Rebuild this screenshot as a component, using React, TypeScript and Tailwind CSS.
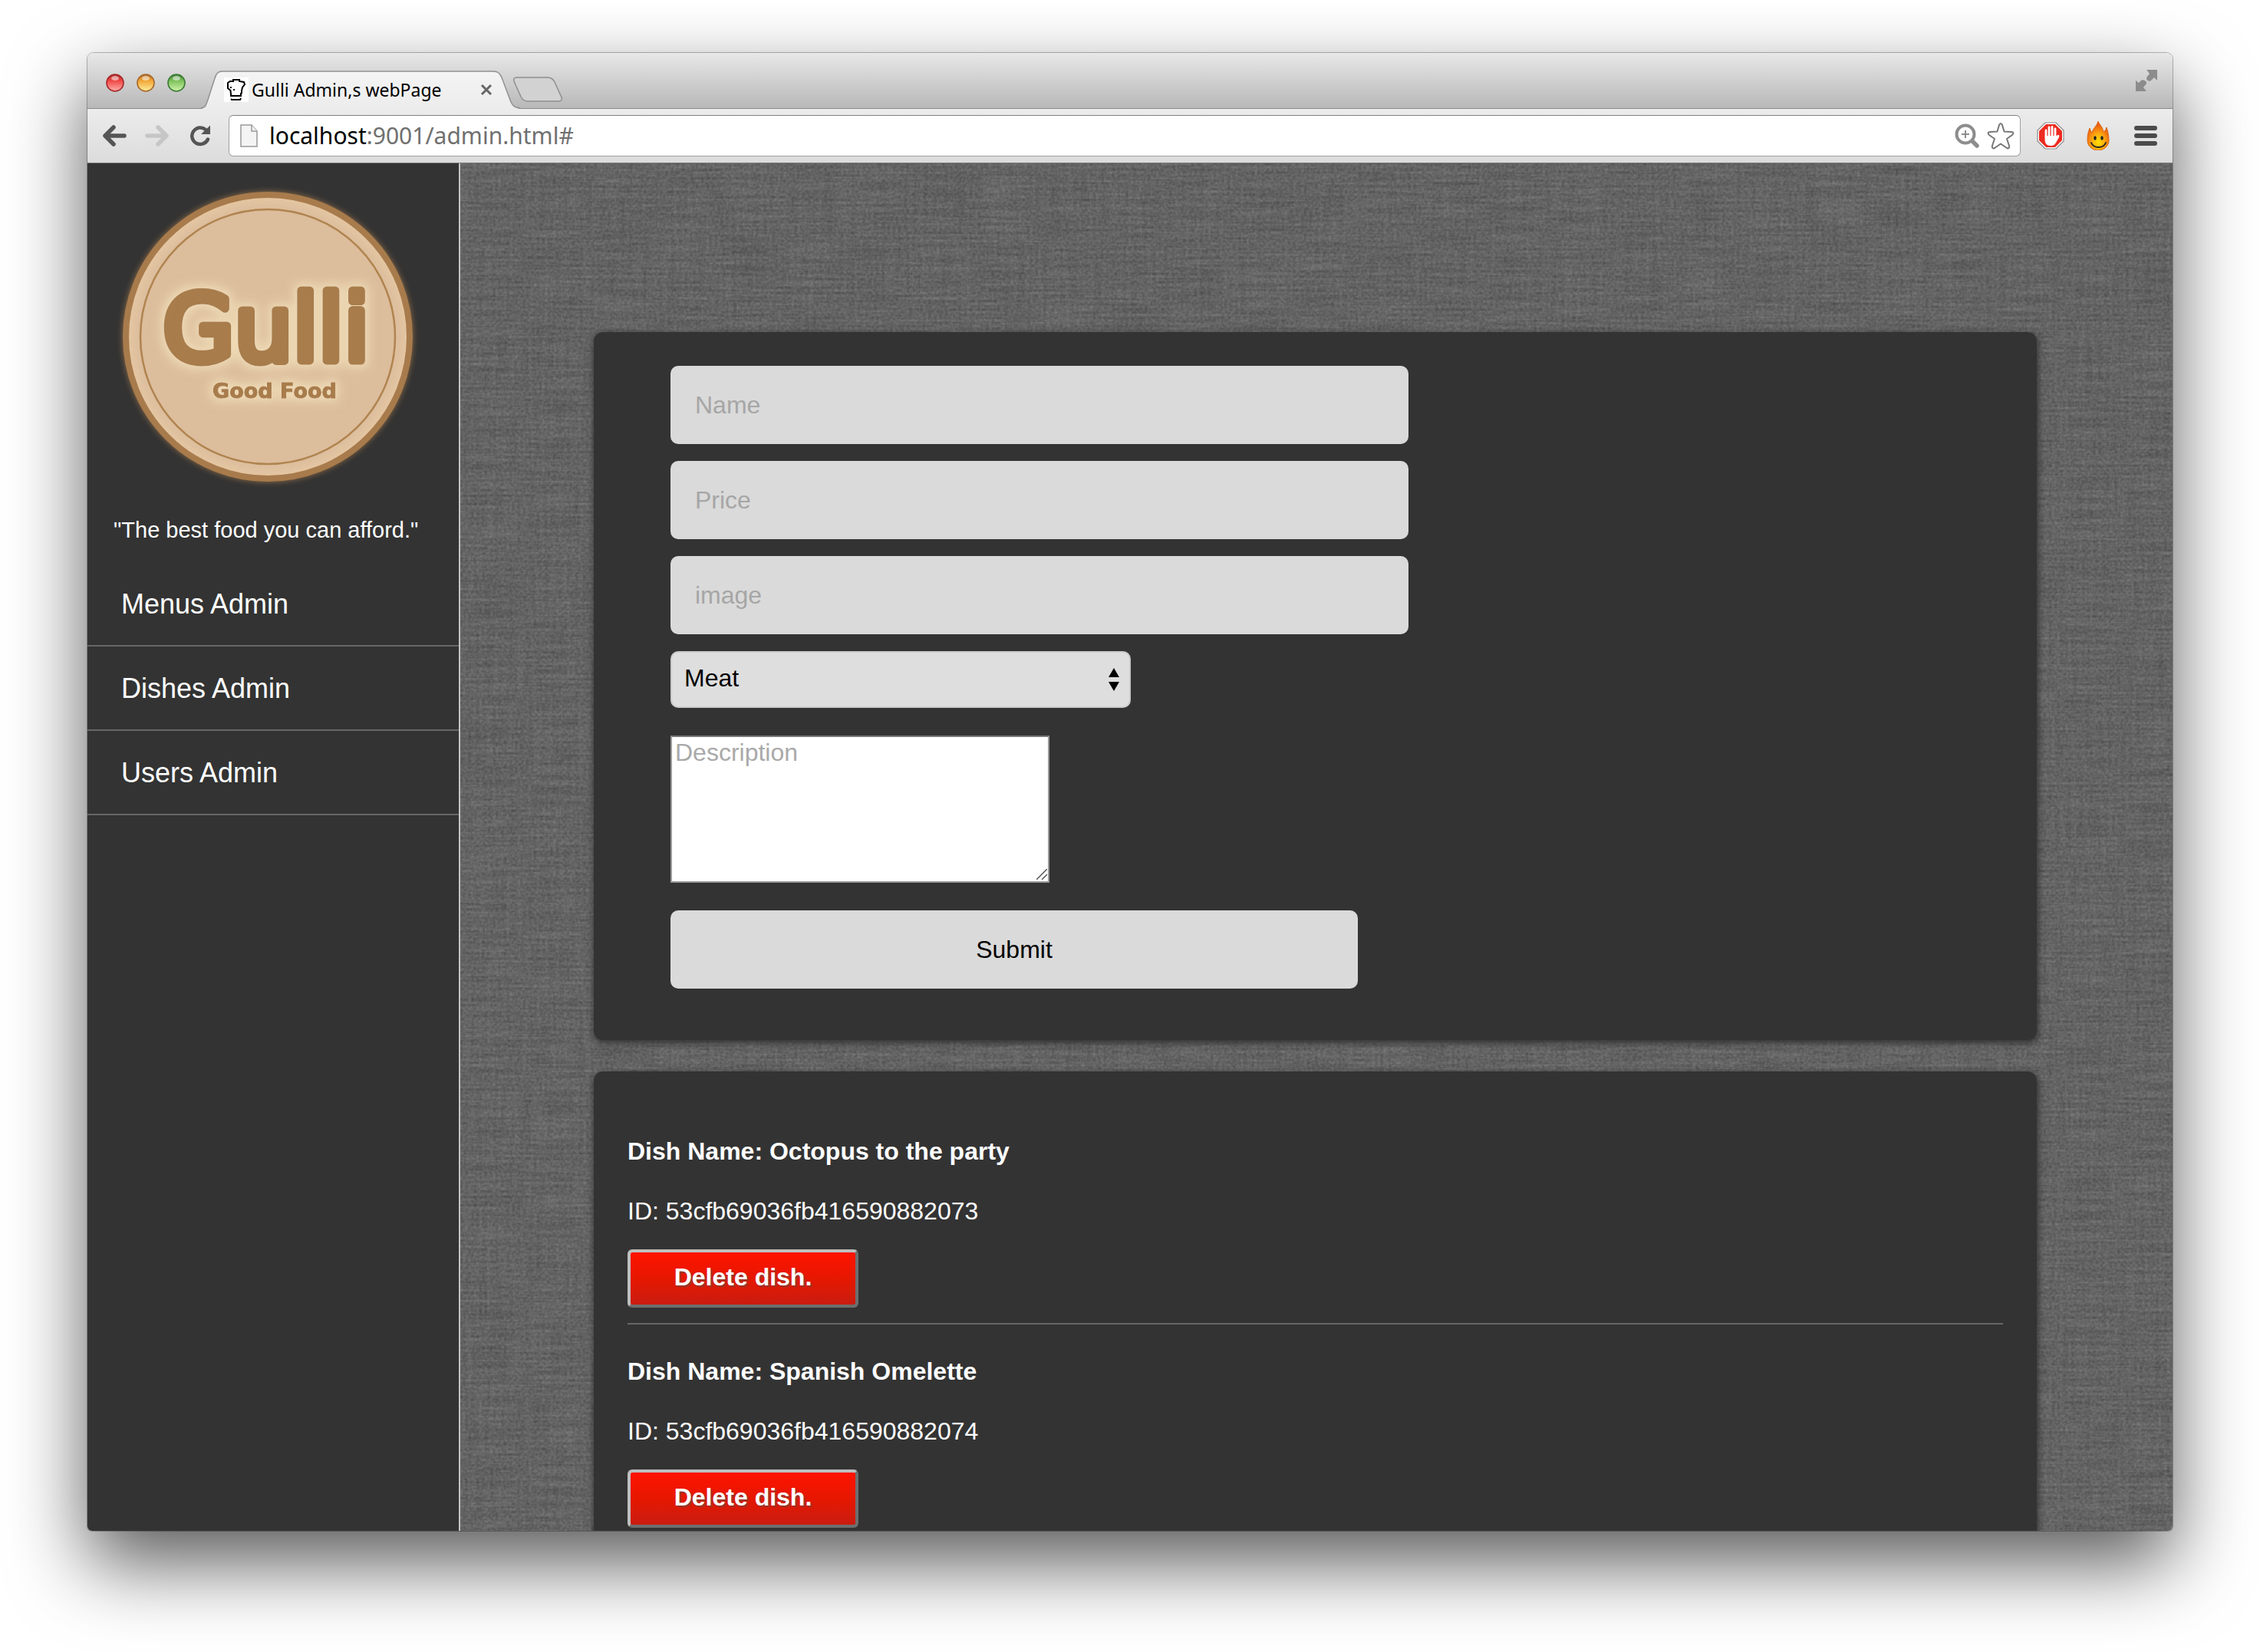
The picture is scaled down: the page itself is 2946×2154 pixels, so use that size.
import React from "react";

const navItems = ["Menus Admin", "Dishes Admin", "Users Admin"];

const dishes = [
  { name: "Octopus to the party", id: "53cfb69036fb416590882073" },
  { name: "Spanish Omelette", id: "53cfb69036fb416590882074" },
];

function TrafficLight({ label, id, edge, from, to }: { label: string; id: string; edge: string; from: string; to: string }) {
  return (
    <button type="button" aria-label={label} className="size-6 shrink-0">
      <svg viewBox="0 0 24 24" className="size-6">
        <defs>
          <linearGradient id={id} x1="0" y1="0" x2="0" y2="1">
            <stop offset="0" stopColor={edge} />
            <stop offset="0.35" stopColor={from} />
            <stop offset="1" stopColor={to} />
          </linearGradient>
        </defs>
        <circle cx="12" cy="12" r="11" fill={`url(#${id})`} stroke={edge} strokeWidth="1.6" />
        <ellipse cx="12" cy="6" rx="5" ry="3" fill="#fff" opacity="0.55" />
      </svg>
    </button>
  );
}

function ChefHat() {
  return (
    <svg viewBox="0 0 32 32" className="size-8 shrink-0 bg-white" fill="none" stroke="#000" strokeWidth="2">
      <path d="M9 22L8.500 17L5 14V7L8 5L12 5V3H20V5L26 6L27 9L24 13L23 17V21M8 13H10M12 16H14M9 21V24H22V20M9 28L10 29H21L22 27" />
    </svg>
  );
}

function TabStrip() {
  return (
    <div className="flex h-[73px] shrink-0 items-end rounded-t-lg border-b border-[#8a8a8a] bg-linear-to-b from-[#e8e8e8] to-[#b8b8b8]">
      <div className="flex gap-4 self-center pt-[5px] pl-6">
        <TrafficLight label="Close window" id="red" edge="#a32a2a" from="#ee4441" to="#ffb0ac" />
        <TrafficLight label="Minimize window" id="amber" edge="#a8682a" from="#f0a433" to="#ffee9c" />
        <TrafficLight label="Zoom window" id="green" edge="#3d7a35" from="#79bf58" to="#d0f5ac" />
      </div>
      <div className="relative -mb-px ml-5 flex h-[50px] w-[416px] items-center pl-[30px]">
        <svg viewBox="0 0 416 50" className="absolute inset-0 size-full" preserveAspectRatio="none">
          <defs>
            <linearGradient id="tab" x1="0" y1="0" x2="0" y2="1">
              <stop offset="0" stopColor="#f4f4f4" />
              <stop offset="1" stopColor="#ececec" />
            </linearGradient>
          </defs>
          <path d="M0 50C6 49 6 46 9 38L18 10C20 4 22 1 28 1H381C387 1 389 3 392 9L404 41C407 47 409 49 416 50Z" fill="url(#tab)" />
          <path d="M0 49C6 48 6 46 9 38L18 10C20 4 22 1 28 1H381C387 1 389 3 392 9L404 41C407 47 409 48 416 49" fill="none" stroke="#909090" strokeWidth="1.500" />
        </svg>
        <div className="relative flex flex-1 items-center gap-1">
          <ChefHat />
          <span className="flex-1 font-['Noto_Sans','Open_Sans',sans-serif] text-[23px] leading-8 whitespace-nowrap text-black">Gulli Admin,s webPage</span>
          <button type="button" aria-label="Close tab" className="mr-9 size-4">
            <svg viewBox="0 0 16 16" className="size-4" stroke="#666" strokeWidth="3">
              <path d="M2 2L14 14M14 2L2 14" />
            </svg>
          </button>
        </div>
      </div>
      <button type="button" aria-label="New tab" className="-ml-2.5 mb-2 h-[33px] w-[66px]">
        <svg viewBox="0 0 66 33" className="size-full">
          <path d="M6 1H46C51 1 53 3 55 7L64 27C65 30 64 32 60 32H20C15 32 13 30 11 26L2 6C1 3 2 1 6 1Z" fill="#d2d2d2" stroke="#8e8e8e" strokeWidth="1.500" />
        </svg>
      </button>
      <button type="button" aria-label="Enter full screen" className="mr-5 mb-[22px] ml-auto size-7">
        <svg viewBox="0 0 28 28" className="size-7" fill="#8c8c8c">
          <path d="M14 0H28V14L24 10L20 14C18 16 14 14 14 11C14 9 16 8 18 5Z" />
          <path d="M0 14L4 17L7 14C10 12 15 15 14 18C13 20 11 21 10 23L14 28H0Z" />
        </svg>
      </button>
    </div>
  );
}

function Toolbar() {
  return (
    <div className="flex h-[71px] shrink-0 items-center border-b border-[#777] bg-linear-to-b from-[#ececec] to-[#dcdcdc]">
      <div className="flex shrink-0 items-center gap-6 pl-[19px]">
        <button type="button" aria-label="Back" className="size-8">
          <svg viewBox="0 0 32 32" className="size-8" fill="none" stroke="#555" strokeWidth="5.500" strokeLinecap="round" strokeLinejoin="round">
            <path d="M15 5L4 16L15 27M5 16H29" />
          </svg>
        </button>
        <button type="button" aria-label="Forward" className="size-8">
          <svg viewBox="0 0 32 32" className="size-8" fill="none" stroke="#c6c6c6" strokeWidth="5.500" strokeLinecap="round" strokeLinejoin="round">
            <path d="M17 5L28 16L17 27M27 16H3" />
          </svg>
        </button>
        <button type="button" aria-label="Reload" className="size-8">
          <svg viewBox="0 0 32 32" className="size-8" fill="none" stroke="#555" strokeWidth="4.500">
            <path d="M26 20.500A10.800 10.800 0 1 1 23 8" strokeLinecap="round" />
            <path d="M29 2.500V14H17Z" fill="#555" stroke="none" />
          </svg>
        </button>
      </div>
      <div className="ml-[21px] flex h-[54px] min-w-0 flex-1 items-center rounded-md border border-[#a0a0a0] border-t-[#808080] bg-white pr-[7px] pl-3.5">
        <svg viewBox="0 0 24 30" className="mr-3.5 h-[30px] w-6 shrink-0" fill="#f4f4f4" stroke="#999" strokeWidth="1.500">
          <path d="M1 1H15L22 9V29H1Z" />
          <path d="M15 1V9H22" />
        </svg>
        <span className="flex-1 font-['Noto_Sans','Open_Sans',sans-serif] text-[30px] leading-10 whitespace-nowrap text-[#707070]">
          <span className="text-black">localhost</span>:9001/admin.html#
        </span>
        <svg viewBox="0 0 32 32" className="size-8 shrink-0" fill="none" stroke="#8d8d8d">
          <circle cx="14" cy="14" r="11.500" strokeWidth="4" />
          <path d="M23 23L29 29" strokeWidth="5.500" strokeLinecap="round" />
          <path d="M14 9V19M9 14H19" strokeWidth="2" />
        </svg>
        <svg viewBox="0 0 36 36" className="ml-2.5 size-9 shrink-0" fill="#fff" stroke="#777" strokeWidth="2" strokeLinejoin="round">
          <path d="M18 2C19 2 19.500 3 20 4L22.500 12.500L32 13C35 13 35 15 33 17L26 22L29 31C30 34 28 35 26 34L18 28.500L10 34C8 35 6 34 7 31L10 22L3 17C1 15 1 13 4 13L13.500 12.500L16 4C16.500 3 17 2 18 2Z" />
        </svg>
      </div>
      <div className="flex shrink-0 items-center pr-[19px] pl-[21px]">
        <button type="button" aria-label="Ad blocker" className="size-9">
          <svg viewBox="0 0 36 36" className="size-9">
            <path d="M11 1H25L35 11V25L25 35H11L1 25V11Z" fill="#fff" stroke="#888" strokeWidth="1.200" />
            <path d="M12 3H24L33 12V24L24 33H12L3 24V12Z" fill="#ee2b20" />
            <path d="M12 20V11M16 18V7M20 18V6.500M24 19V9" stroke="#fff" strokeWidth="2.800" strokeLinecap="round" />
            <path d="M10.600 18H25.400L28 17C30 17 29.500 19 28.500 21L25 27C23 30 22 31 18 31C13 31 10.600 28 10.600 23Z" fill="#fff" />
          </svg>
        </button>
        <button type="button" aria-label="Flame extension" className="ml-7 h-[38px] w-8">
          <svg viewBox="0 0 32 38" className="h-[38px] w-8">
            <defs>
              <radialGradient id="flame" cx="0.5" cy="0.72" r="0.6">
                <stop offset="0" stopColor="#ffe000" />
                <stop offset="0.45" stopColor="#ffb010" />
                <stop offset="1" stopColor="#ea5a10" />
              </radialGradient>
            </defs>
            <path d="M16 0C17 4 22 7 23 14C25 13 26 11 27 8C28 11 30 18 30 25C30 32 24 38 16 38C8 38 2 32 2 25C2 18 3 14 5 9C6 12 7 14 8 15C9 9 15 6 16 0Z" fill="url(#flame)" stroke="#d9691a" />
            <ellipse cx="12" cy="22" rx="1.800" ry="2.800" fill="#222" />
            <ellipse cx="21" cy="22" rx="1.800" ry="2.800" fill="#222" />
            <path d="M7 28C10 36 23 36 26 28" fill="none" stroke="#222" strokeWidth="1.800" strokeLinecap="round" />
          </svg>
        </button>
        <button type="button" aria-label="Menu" className="ml-[30px] size-8">
          <svg viewBox="0 0 32 32" className="size-8" stroke="#4b4b4b" strokeWidth="6" strokeLinecap="round">
            <path d="M4 6H28M4 16H28M4 26H28" />
          </svg>
        </button>
      </div>
    </div>
  );
}

function Logo() {
  return (
    <svg viewBox="0 0 400 400" className="size-[400px]" role="img" aria-label="Gulli Good Food">
      <defs>
        <filter id="halo" x="-20%" y="-40%" width="140%" height="180%">
          <feMorphology in="SourceAlpha" operator="dilate" radius="4" result="fat" />
          <feGaussianBlur in="fat" stdDeviation="7" result="soft" />
          <feFlood floodColor="#efdbb6" />
          <feComposite in2="soft" operator="in" result="glow" />
          <feMerge>
            <feMergeNode in="glow" />
            <feMergeNode in="SourceGraphic" />
          </feMerge>
        </filter>
        <filter id="rim" x="-10%" y="-10%" width="120%" height="120%">
          <feGaussianBlur stdDeviation="4" />
        </filter>
        <radialGradient id="disc">
          <stop offset="0.9" stopColor="#dcbd9c" />
          <stop offset="1" stopColor="#e6c8a4" />
        </radialGradient>
      </defs>
      <circle cx="200" cy="200" r="188" fill="#a87b4c" filter="url(#rim)" />
      <circle cx="200" cy="200" r="185" fill="url(#disc)" stroke="#a87b4c" strokeWidth="8" />
      <circle cx="200" cy="200" r="166" fill="none" stroke="#b0844f" strokeWidth="2.500" />
      <g fill="#a87b4c" stroke="#a87b4c" strokeLinejoin="round" filter="url(#halo)" className="font-['DejaVu_Sans',sans-serif]">
        <text x="198" y="231" textAnchor="middle" strokeWidth="11" className="text-[120px]">Gulli</text>
        <text x="209" y="280" textAnchor="middle" strokeWidth="1" className="text-[27px] font-bold">Good Food</text>
      </g>
    </svg>
  );
}

function Sidebar() {
  return (
    <aside className="w-[486px] shrink-0 border-r-2 border-[#c4c4c4] bg-[#333]">
      <div className="flex justify-center pt-[26px] pr-3.5">
        <Logo />
      </div>
      <p className="mt-8 pl-[34px] text-[29px] leading-10">"The best food you can afford."</p>
      <nav className="mt-[22px]">
        {navItems.map((item) => (
          <a key={item} href="#" className="block h-[110px] border-b-2 border-[#666] pl-11 text-[36px] leading-[110px]">
            {item}
          </a>
        ))}
      </nav>
    </aside>
  );
}

function Linen() {
  return (
    <svg className="absolute inset-0 size-full" aria-hidden="true">
      <filter id="linen" x="0" y="0" width="100%" height="100%" colorInterpolationFilters="sRGB">
        <feTurbulence type="fractalNoise" baseFrequency="0.012 0.28" numOctaves="2" seed="3" result="weft" />
        <feColorMatrix in="weft" values="0.380 0 0 0 0.200  0.380 0 0 0 0.200  0.380 0 0 0 0.200  0 0 0 0 1" result="a" />
        <feTurbulence type="fractalNoise" baseFrequency="0.2 0.01" numOctaves="2" seed="8" result="warp" />
        <feColorMatrix in="warp" values="0.200 0 0 0 0.290  0.200 0 0 0 0.290  0.200 0 0 0 0.290  0 0 0 0 1" result="b" />
        <feTurbulence type="fractalNoise" baseFrequency="0.28" numOctaves="2" seed="5" result="grain" />
        <feColorMatrix in="grain" values="0.4 0 0 0 0.190  0.4 0 0 0 0.190  0.4 0 0 0 0.190  0 0 0 0 1" result="c" />
        <feComposite in="a" in2="b" operator="arithmetic" k2="0.5" k3="0.5" result="ab" />
        <feComposite in="ab" in2="c" operator="arithmetic" k2="0.6" k3="0.4" />
      </filter>
      <rect width="100%" height="100%" filter="url(#linen)" />
    </svg>
  );
}

function TextField({ label }: { label: string }) {
  return (
    <input
      type="text"
      aria-label={label}
      placeholder={label}
      className="h-[102px] w-[962px] max-w-full rounded-[10px] bg-[#dadada] px-8 text-[32px] text-black placeholder:text-[#a6a6a6]"
    />
  );
}

function DishForm() {
  return (
    <form className="flex flex-col items-start gap-[22px] rounded-xl bg-[#333] px-[100px] pt-11 pb-[67px] shadow-[1px_3px_8px_1px_#333]">
      <TextField label="Name" />
      <TextField label="Price" />
      <TextField label="image" />
      <div className="relative w-[600px] max-w-full">
        <select aria-label="Category" className="h-[74px] w-full appearance-none rounded-[10px] border-2 border-[#cbcbcb] bg-[#dedede] px-4 pb-1 text-[32px] text-black">
          <option>Meat</option>
        </select>
        <svg viewBox="0 0 14 30" className="pointer-events-none absolute top-[22px] right-[15px] h-[30px] w-3.5">
          <path d="M7 0L14 12H0ZM7 30L0 18H14Z" fill="#000" />
        </svg>
      </div>
      <div className="relative my-3.5 w-[494px] max-w-full">
        <textarea
          aria-label="Description"
          placeholder="Description"
          className="block h-[192px] w-full resize-none border-2 border-[#9a9a9a] border-t-[#777] bg-white px-1 py-0.5 text-[32px] leading-9 text-black placeholder:text-[#a9a9a9]"
        />
        <svg viewBox="0 0 14 14" className="pointer-events-none absolute right-[3px] bottom-1 size-3.5" stroke="#555" strokeWidth="1.500">
          <path d="M0 14L14 0M7 14L14 7" />
        </svg>
      </div>
      <button type="submit" className="h-[102px] w-[896px] max-w-full rounded-[10px] bg-[#dadada] text-[32px] text-black">
        Submit
      </button>
    </form>
  );
}

function DishList() {
  return (
    <section className="mt-[41px] rounded-t-xl bg-[#333] px-11 pt-[86px] shadow-[1px_3px_8px_1px_#333]">
      {dishes.map((dish) => (
        <article key={dish.id} className="mb-[43px] border-b-2 border-[#666] pb-5 text-[32px] leading-9">
          <h2 className="font-bold">Dish Name: {dish.name}</h2>
          <p className="mt-[42px]">ID: {dish.id}</p>
          <button
            type="button"
            className="mt-8 block h-[76px] w-[301px] rounded-md border-4 border-t-[#bfbfbf] border-r-[#6e6e6e] border-b-[#6e6e6e] border-l-[#bfbfbf] bg-linear-to-b from-[#ff1300] via-[#e61700] to-[#c91c10] pb-1 font-bold [text-shadow:2px_2px_2px_#8c3a30]"
          >
            Delete dish.
          </button>
        </article>
      ))}
    </section>
  );
}

export default function App() {
  return (
    <div className="flex h-screen flex-col bg-white px-[114px] pt-[69px] pb-[158px] font-['Liberation_Sans',Arial,sans-serif] text-white">
      <div className="flex min-h-0 flex-1 flex-col overflow-hidden rounded-t-lg rounded-b-md shadow-[0_0_0_1px_#0004,0_42px_100px_#000000a6]">
        <TabStrip />
        <Toolbar />
        <div className="flex min-h-0 flex-1">
          <Sidebar />
          <main className="relative min-w-0 flex-1 overflow-hidden">
            <Linen />
            <div className="relative pt-[220px] pr-[177px] pl-[174px]">
              <DishForm />
              <DishList />
            </div>
          </main>
        </div>
      </div>
    </div>
  );
}
